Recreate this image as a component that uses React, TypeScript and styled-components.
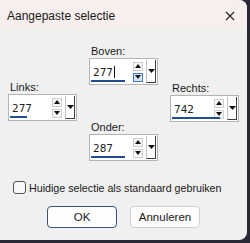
import React from "react";
import styled, { createGlobalStyle } from "styled-components";

const GlobalStyle = createGlobalStyle`
	* { box-sizing: border-box; }
	html, body {
		margin: 0;
		padding: 0;
		background: #2d2836;
		font-family: "Liberation Sans", Arial, sans-serif;
	}
`;

type FieldProps = {
	label: string;
	value: string;
	barWidth: number;
	caret?: boolean;
	hoverDown?: boolean;
};

function SpinField({ label, value, barWidth, caret, hoverDown }: FieldProps) {
	return (
		<Field>
			<Label>{label}</Label>
			<SpinBox>
				<ValueText>
					{value}
					{caret && <Caret />}
				</ValueText>
				<Bar style={{ width: barWidth }} />
				<SpinColumn>
					<SpinButton>
						<Arrow viewBox="0 0 6 4" width="6" height="4">
							<path d="M0 4 L3 0 L6 4 Z" />
						</Arrow>
					</SpinButton>
					<SpinButton $active={hoverDown}>
						<Arrow viewBox="0 0 6 4" width="6" height="4">
							<path d="M0 0 L6 0 L3 4 Z" />
						</Arrow>
					</SpinButton>
				</SpinColumn>
				<DropButton>
					<Arrow viewBox="0 0 7 4" width="7" height="4">
						<path d="M0 0 L7 0 L3.5 4 Z" />
					</Arrow>
				</DropButton>
			</SpinBox>
		</Field>
	);
}

export default function App() {
	return (
		<>
			<GlobalStyle />
			<Dialog>
				<TitleBar>
					<Title>Aangepaste selectie</Title>
					<CloseIcon viewBox="0 0 10 10" width="10" height="10">
						<path d="M1 1 L9 9 M9 1 L1 9" />
					</CloseIcon>
				</TitleBar>
				<Body>
					<Fields>
						<Column $offset={36}>
							<SpinField label="Links:" value="277" barWidth={17} />
						</Column>
						<CenterColumn>
							<SpinField label="Boven:" value="277" barWidth={34} caret hoverDown />
							<SpinField label="Onder:" value="287" barWidth={34} />
						</CenterColumn>
						<Column $offset={37}>
							<SpinField label="Rechts:" value="742" barWidth={48} />
						</Column>
					</Fields>
					<CheckRow>
						<CheckBox />
						<CheckLabel>Huidige selectie als standaard gebruiken</CheckLabel>
					</CheckRow>
					<ButtonRow>
						<Button $primary>OK</Button>
						<Button>Annuleren</Button>
					</ButtonRow>
				</Body>
			</Dialog>
		</>
	);
}

const Dialog = styled.div`
	width: 247px;
	height: 240px;
	display: flex;
	flex-direction: column;
	background: #f0f0f0;
	border-radius: 0 8px 8px 0;
	overflow: hidden;
`;

const TitleBar = styled.div`
	height: 30px;
	flex-shrink: 0;
	display: flex;
	align-items: center;
	justify-content: space-between;
	padding: 0 12px 0 7px;
	background: #f7eeee;
`;

const Title = styled.span`
	font-size: 12px;
	color: #1a1a1a;
	margin-top: 1px;
	white-space: nowrap;
`;

const CloseIcon = styled.svg`
	fill: none;
	stroke: #222;
	stroke-width: 1.1;
	margin-top: 1px;
`;

const Body = styled.div`
	flex: 1;
	display: flex;
	flex-direction: column;
	padding: 14px 0 0 8px;
`;

const Fields = styled.div`
	display: flex;
	gap: 12px;
`;

const Column = styled.div<{ $offset: number }>`
	display: flex;
	flex-direction: column;
	padding-top: ${(p) => p.$offset}px;
`;

const CenterColumn = styled.div`
	display: flex;
	flex-direction: column;
	gap: 35px;
`;

const Field = styled.div`
	display: flex;
	flex-direction: column;
	width: 69px;
`;

const Label = styled.label`
	font-size: 11px;
	line-height: 14px;
	height: 14px;
	color: #1a1a1a;
	padding-left: 2px;
	white-space: nowrap;
`;

const SpinBox = styled.div`
	position: relative;
	height: 27px;
	display: flex;
	align-items: center;
	background: #ffffff;
	border: 1px solid #b4b4b4;
	padding: 0 1px 0 3px;
`;

const ValueText = styled.span`
	flex: 1;
	display: flex;
	align-items: center;
	font-family: "DejaVu Sans", sans-serif;
	font-size: 10.5px;
	color: #222;
	margin-top: 1px;
`;

const Caret = styled.span`
	display: inline-block;
	width: 1px;
	height: 12px;
	background: #111;
	margin-left: 1px;
`;

const Bar = styled.div`
	position: absolute;
	left: 1px;
	bottom: 2px;
	height: 2px;
	background: #1e4d91;
`;

const SpinColumn = styled.div`
	display: flex;
	flex-direction: column;
	gap: 2px;
	margin-right: 3px;
`;

const SpinButton = styled.div<{ $active?: boolean }>`
	width: 10px;
	height: 9px;
	display: flex;
	align-items: center;
	justify-content: center;
	border: 1px solid ${(p) => (p.$active ? "#3f7ac4" : "#cfcfcf")};
	background: ${(p) => (p.$active ? "#d8e6f6" : "#f7f7f7")};
`;

const Arrow = styled.svg`
	fill: #111;
	display: block;
`;

const DropButton = styled.div`
	width: 10px;
	height: 23px;
	display: flex;
	align-items: center;
	justify-content: center;
	border-left: 1px solid #c4c4c4;
	border-right: 1px solid #3c3c3c;
	border-bottom: 1px solid #3c3c3c;
	align-self: flex-start;
	margin-top: 1px;
`;

const CheckRow = styled.div`
	display: flex;
	align-items: center;
	gap: 3px;
	margin-top: 20px;
	padding-left: 5px;
`;

const CheckBox = styled.span`
	flex-shrink: 0;
	width: 13px;
	height: 13px;
	border: 1px solid #555;
	border-radius: 3px;
	background: #f7f7f7;
`;

const CheckLabel = styled.span`
	font-size: 10.7px;
	color: #1a1a1a;
	white-space: nowrap;
`;

const ButtonRow = styled.div`
	display: flex;
	justify-content: center;
	gap: 13px;
	margin-top: 12px;
	margin-left: -8px;
`;

const Button = styled.button<{ $primary?: boolean }>`
	width: 70px;
	height: 22px;
	padding: 0;
	font-family: "Liberation Sans", Arial, sans-serif;
	font-size: 11.5px;
	color: #1a1a1a;
	background: #fdfdfd;
	border: 1px solid ${(p) => (p.$primary ? "#36557f" : "#cfcfcf")};
	border-radius: 4px;
`;
